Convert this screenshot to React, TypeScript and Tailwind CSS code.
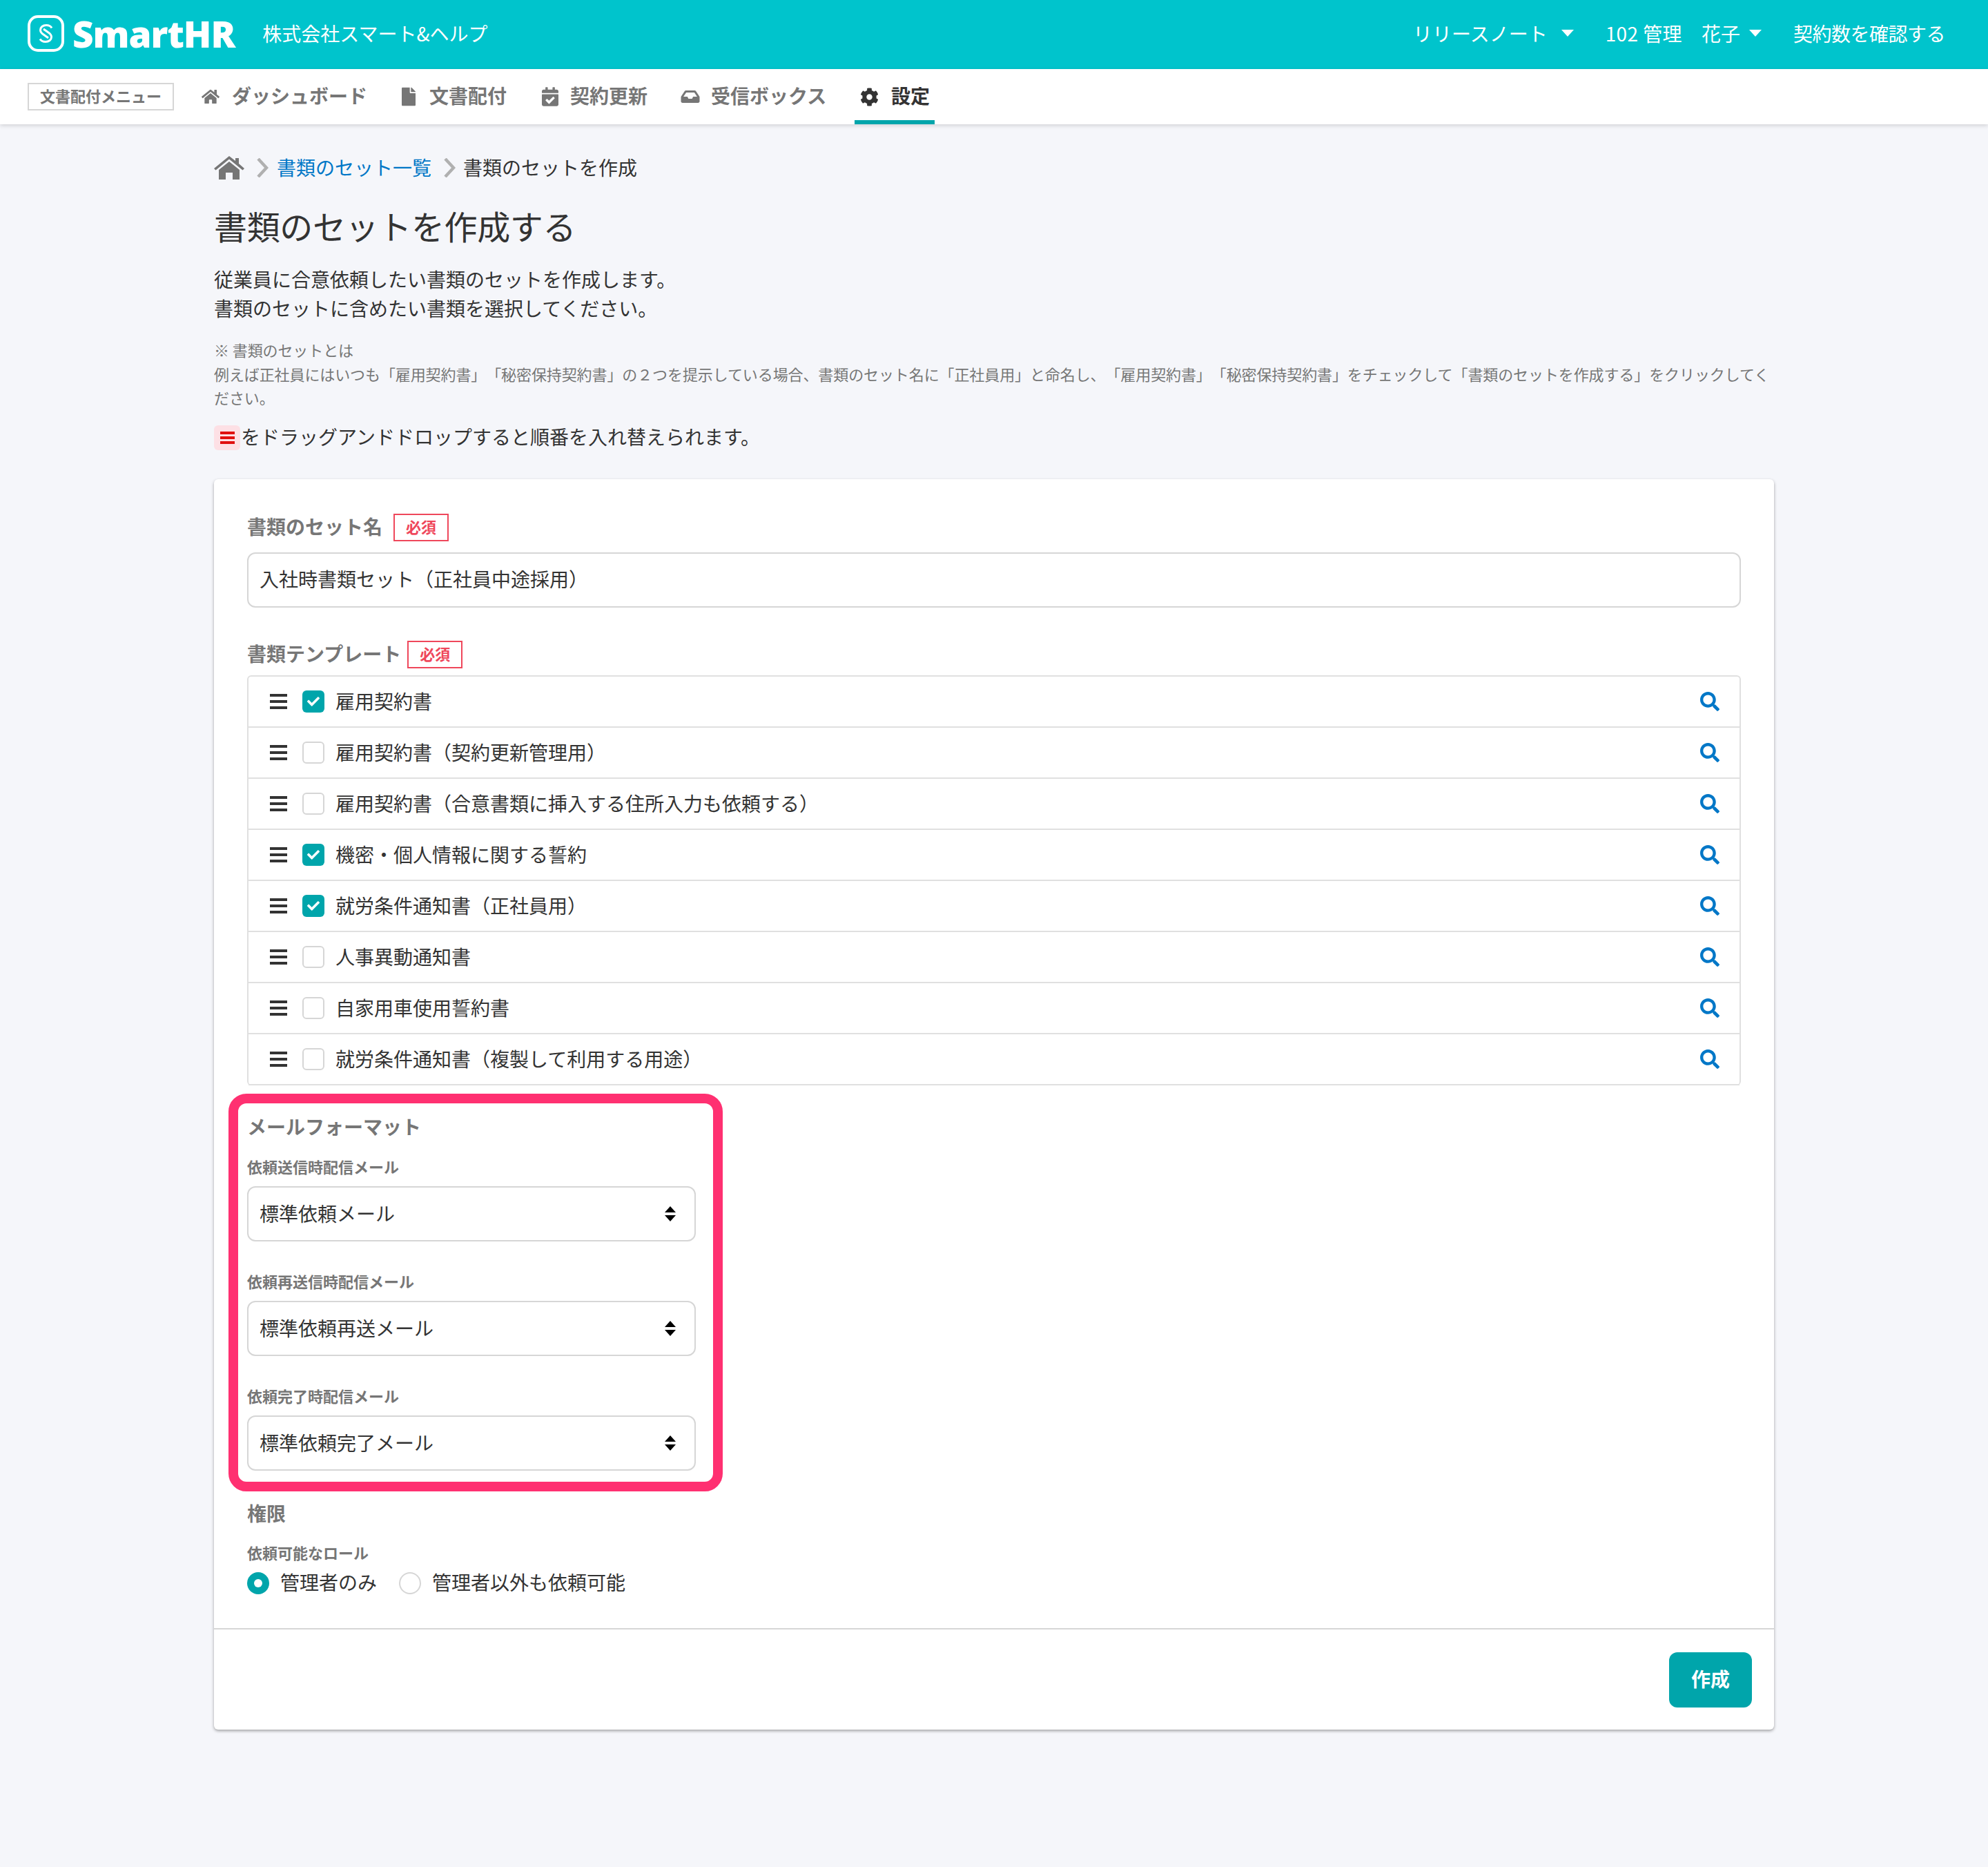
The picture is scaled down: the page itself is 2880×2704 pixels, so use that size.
import { FaCalendarCheck, FaCheck, FaCog, FaFile, FaHome, FaInbox, FaSearch } from "react-icons/fa";

const templates = [
  { name: "雇用契約書", checked: true },
  { name: "雇用契約書（契約更新管理用）", checked: false },
  { name: "雇用契約書（合意書類に挿入する住所入力も依頼する）", checked: false },
  { name: "機密・個人情報に関する誓約", checked: true },
  { name: "就労条件通知書（正社員用）", checked: true },
  { name: "人事異動通知書", checked: false },
  { name: "自家用車使用誓約書", checked: false },
  { name: "就労条件通知書（複製して利用する用途）", checked: false },
];

const mailSelects = [
  { label: "依頼送信時配信メール", value: "標準依頼メール" },
  { label: "依頼再送信時配信メール", value: "標準依頼再送メール" },
  { label: "依頼完了時配信メール", value: "標準依頼完了メール" },
];

const Caret = () => (
  <svg width="18" height="10" viewBox="0 0 18 10" className="fill-white">
    <path d="M0 0h18L9 10z" />
  </svg>
);

const Chevron = () => (
  <svg width="18" height="28" viewBox="0 0 18 28" fill="none" className="stroke-[#b0b0b0] stroke-[4.5]">
    <path d="M3 1l12 13L3 27" />
  </svg>
);

const HomeIcon = () => (
  <svg width="44" height="34" viewBox="0 0 44 34" className="fill-[#767676]">
    <path d="M22 0l9 7V3h5v8l8 7-2.5 2.5L22 4.5 2.5 20.5 0 18z" />
    <path d="M22 8l15 12v14H27V24H17v10H7V20z" />
  </svg>
);

const Bars = ({ className }: { className: string }) => (
  <div className={`flex flex-col justify-between ${className}`}>
    <span className="h-1 bg-current" />
    <span className="h-1 bg-current" />
    <span className="h-1 bg-current" />
  </div>
);

const Required = () => (
  <span className="flex h-10 w-20 items-center justify-center border-2 border-[#ef475b] pb-1 text-[22px] font-bold text-[#ef475b]">
    必須
  </span>
);

const SortIcon = () => (
  <svg width="16" height="22" viewBox="0 0 16 22" className="fill-black">
    <path d="M8 0l8 9H0zM0 13h16l-8 9z" />
  </svg>
);

const Logo = () => (
  <svg width="53" height="53" viewBox="0 0 53 53" fill="none" className="stroke-white">
    <rect x="2" y="2" width="49" height="49" rx="13" strokeWidth="4" />
    <path d="M35 18.5C33 15 30 14.5 27 14.5 22 14.5 18.5 17.5 18.5 21.5 18.5 24 20 26 23 28L30 33" strokeWidth="3" />
    <path d="M18 34.5C20 38 23 38.5 26 38.5 31 38.5 34.5 35.5 34.5 31.5 34.5 29 33 27 30 25L23 20" strokeWidth="3" />
  </svg>
);

const navItems = [
  { label: "ダッシュボード", icon: <FaHome className="mr-[18px] h-6 w-[26px]" />, width: "w-[290px]" },
  { label: "文書配付", icon: <FaFile className="mr-5 h-7 w-5" />, width: "w-[203px]" },
  { label: "契約更新", icon: <FaCalendarCheck className="mr-[17px] h-7 w-6" />, width: "w-[201px]" },
  { label: "受信ボックス", icon: <FaInbox className="mr-[16px] h-6 w-7" />, width: "w-[252px]" },
];

export default function App() {
  return (
    <div className="min-h-[2704px] bg-[#f5f6fa] font-['Noto_Sans_CJK_JP','Noto_Sans',sans-serif] text-[28px] text-[#333] [text-spacing-trim:space-all]">
      <header className="flex h-[100px] items-center justify-between bg-[#00c4cc] pb-1 pl-10 pr-[62px] text-white">
        <div className="flex items-center">
          <Logo />
          <span className="ml-3 font-['Open_Sans',sans-serif] text-[53px] leading-none font-extrabold tracking-[-1px]">SmartHR</span>
          <span className="ml-[40px]">株式会社スマート&amp;ヘルプ</span>
        </div>
        <div className="flex items-center">
          <span>リリースノート</span>
          <span className="ml-5 mr-[46px]"><Caret /></span>
          <span className="tracking-[0.4px]">102 管理</span>
          <span className="ml-7">花子</span>
          <span className="ml-[13px] mr-[46px]"><Caret /></span>
          <span className="tracking-[-0.5px]">契約数を確認する</span>
        </div>
      </header>

      <nav className="flex h-20 items-center bg-white pl-10 font-bold text-[#767676] shadow-[0_2px_6px_rgba(0,0,0,0.15)]">
        <span className="flex h-10 w-[212px] items-center justify-center border-2 border-[#d6d6d6] pb-1 text-[22px]">
          文書配付メニュー
        </span>
        <div className="ml-10 flex h-full items-center">
          {navItems.map((item) => (
            <a key={item.label} className={`flex items-center ${item.width}`}>
              {item.icon}
              <span className="pb-1">{item.label}</span>
            </a>
          ))}
          <a className="flex h-full w-[116px] items-center border-b-[6px] border-[#00a5ab] pt-[6px] pl-2 text-[#333]">
            <FaCog className="mr-[18px] h-[27px] w-[27px]" />
            <span className="pb-1">設定</span>
          </a>
        </div>
      </nav>

      <main className="mx-auto w-[2260px] pt-[43px]">
        <div className="flex h-10 items-center">
          <HomeIcon />
          <span className="ml-[17px] mr-[12px]"><Chevron /></span>
          <a className="pb-[2px] text-[#0077c7]">書類のセット一覧</a>
          <span className="ml-[17px] mr-[11px]"><Chevron /></span>
          <span className="pb-[2px]">書類のセットを作成</span>
        </div>

        <h1 className="mt-[33px] text-[48px] leading-[60px] font-normal tracking-[-0.35px]">書類のセットを作成する</h1>

        <p className="mt-[27px] leading-[42px]">
          従業員に合意依頼したい書類のセットを作成します。
          <br />
          書類のセットに含めたい書類を選択してください。
        </p>

        <p className="mt-[22px] text-[22px] leading-[34.5px] tracking-[-0.1px] text-[#767676]">
          ※ 書類のセットとは
          <br />
          例えば正社員にはいつも「雇用契約書」「秘密保持契約書」の２つを提示している場合、書類のセット名に「正社員用」と命名し、「雇用契約書」「秘密保持契約書」をチェックして「書類のセットを作成する」をクリックしてください。
        </p>

        <div className="mt-[23.5px] flex h-9 items-center">
          <span className="flex h-9 w-[38px] items-center justify-center rounded-md bg-[#fde0e5]">
            <Bars className="h-[18px] w-[21px] text-[#e01010]" />
          </span>
          <span className="ml-[1px] pb-1">をドラッグアンドドロップすると順番を入れ替えられます。</span>
        </div>

        <section className="mt-[42px] rounded-md bg-white shadow-[0_2px_4px_rgba(0,0,0,0.35)]">
          <div className="px-12 pt-[50px] pb-[49px]">
            <div className="flex h-10 items-center gap-4 font-bold text-[#767676]">
              <span className="pb-1">書類のセット名</span>
              <Required />
            </div>
            <div className="mt-4 flex h-20 items-center rounded-xl border-2 border-[#d6d6d6] px-4">
              <span className="pb-1">入社時書類セット（正社員中途採用）</span>
            </div>

            <div className="mt-12 flex h-10 items-center gap-[9px] font-bold text-[#767676]">
              <span className="pb-1">書類テンプレート</span>
              <Required />
            </div>
            <ul className="mt-[10px] rounded-md border-2 border-b-0 border-[#e0e0e0]">
              {templates.map((t) => (
                <li key={t.name} className="flex h-[74px] items-center border-b-2 border-[#e0e0e0] pr-[29px] pl-[31px]">
                  <Bars className="h-[22px] w-[25px] text-[#333]" />
                  {t.checked ? (
                    <span className="ml-[22px] flex h-8 w-8 items-center justify-center rounded-md bg-[#00a5ab] text-white">
                      <FaCheck className="h-[18px] w-[18px]" />
                    </span>
                  ) : (
                    <span className="ml-[22px] h-8 w-8 rounded-md border-2 border-[#d6d6d6]" />
                  )}
                  <span className="ml-4 flex-1 pb-[3px]">{t.name}</span>
                  <FaSearch className="h-7 w-7 text-[#0077c7]" />
                </li>
              ))}
            </ul>

            <div className="relative mt-[41px] w-[650px]">
              <div className="absolute -top-[29px] -right-[39px] -bottom-[30px] -left-[27px] rounded-[26px] border-[14px] border-[#ff3071]" />
              <h2 className="h-10 leading-9 font-bold text-[#767676]">メールフォーマット</h2>
              {mailSelects.map((m, i) => (
                <div key={m.label} className={i === 0 ? "mt-[22px]" : "mt-[43px]"}>
                  <div className="h-8 text-[22px] leading-7 font-bold text-[#767676]">{m.label}</div>
                  <div className="mt-[11px] flex h-20 items-center justify-between rounded-xl border-2 border-[#d6d6d6] pr-[27px] pl-4">
                    <span className="pb-[3px]">{m.value}</span>
                    <SortIcon />
                  </div>
                </div>
              ))}
            </div>

            <h2 className="mt-[43px] h-10 leading-9 font-bold text-[#767676]">権限</h2>
            <div className="mt-[21px] h-8 text-[22px] leading-7 font-bold text-[#767676]">依頼可能なロール</div>
            <div className="mt-[11px] flex h-8 items-center">
              <span className="flex h-8 w-8 items-center justify-center rounded-full bg-[#00a5ab]">
                <span className="h-3 w-3 rounded-full bg-white" />
              </span>
              <span className="ml-4 pb-1">管理者のみ</span>
              <span className="ml-8 h-8 w-8 rounded-full border-2 border-[#d6d6d6]" />
              <span className="ml-4 pb-1">管理者以外も依頼可能</span>
            </div>
          </div>

          <div className="flex justify-end border-t-2 border-[#d6d6d6] pt-[33px] pr-8 pb-8">
            <button className="h-20 w-[120px] rounded-xl bg-[#00a5ab] pb-1 font-bold text-white">作成</button>
          </div>
        </section>
      </main>
    </div>
  );
}
